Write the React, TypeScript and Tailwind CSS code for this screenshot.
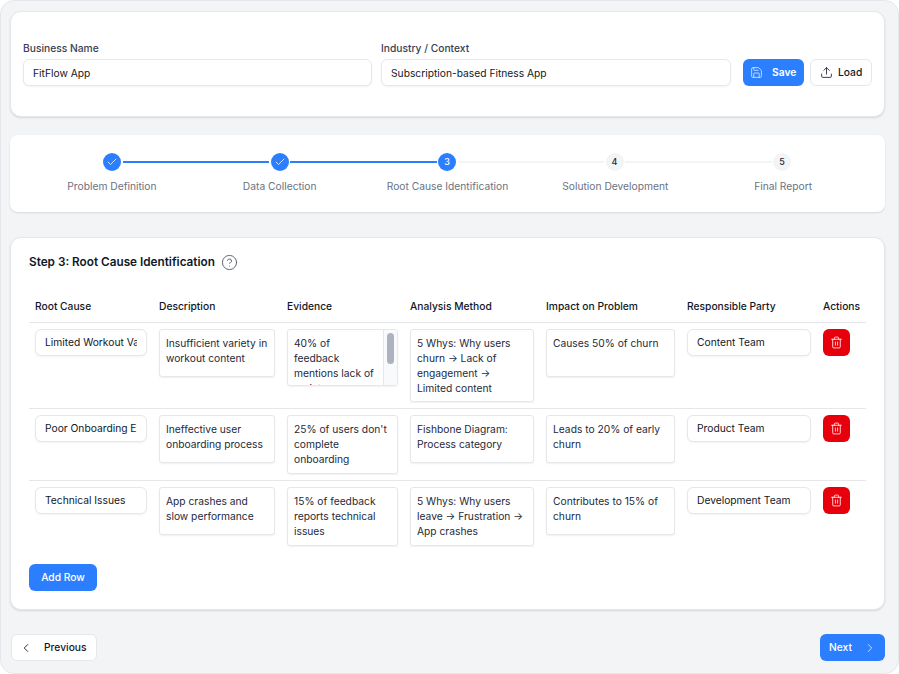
import { Check, ChevronLeft, ChevronRight, CircleHelp, Save, Trash2, Upload } from "lucide-react";

const steps = [
  { n: 1, label: "Problem Definition", state: "done" },
  { n: 2, label: "Data Collection", state: "done" },
  { n: 3, label: "Root Cause Identification", state: "active" },
  { n: 4, label: "Solution Development", state: "todo" },
  { n: 5, label: "Final Report", state: "todo" },
];

const columns = [
  { title: "Root Cause", width: "w-[124px]" },
  { title: "Description", width: "w-[128px]" },
  { title: "Evidence", width: "w-[123px]" },
  { title: "Analysis Method", width: "w-[136px]" },
  { title: "Impact on Problem", width: "w-[141px]" },
  { title: "Responsible Party", width: "w-[136px]" },
  { title: "Actions", width: "w-[49px]" },
];

const rows = [
  {
    cause: "Limited Workout Variety",
    description: "Insufficient variety in workout content",
    evidence: "40% of feedback mentions lack of variety",
    method: "5 Whys: Why users churn → Lack of engagement → Limited content",
    impact: "Causes 50% of churn",
    party: "Content Team",
    evidenceHeight: "h-[57px]",
    methodHeight: "h-[73px]",
    scroll: true,
  },
  {
    cause: "Poor Onboarding Experience",
    description: "Ineffective user onboarding process",
    evidence: "25% of users don't complete onboarding",
    method: "Fishbone Diagram: Process category",
    impact: "Leads to 20% of early churn",
    party: "Product Team",
    evidenceHeight: "h-[59px]",
    methodHeight: "h-[48px]",
    scroll: false,
  },
  {
    cause: "Technical Issues",
    description: "App crashes and slow performance",
    evidence: "15% of feedback reports technical issues",
    method: "5 Whys: Why users leave → Frustration → App crashes",
    impact: "Contributes to 15% of churn",
    party: "Development Team",
    evidenceHeight: "h-[59px]",
    methodHeight: "h-[59px]",
    scroll: false,
  },
];

const Cell = ({ value, height, narrow }: { value: string; height: string; narrow?: boolean }) => (
  <textarea
    readOnly
    value={value}
    className={`block w-full ${height} resize-none overflow-hidden rounded-[3px] border border-gray-200 bg-white py-[6px] pl-[6px] ${narrow ? "pr-[20px]" : "pr-[5px]"} text-[10.25px] leading-[15px] text-gray-800 shadow-[0_1px_2px_rgba(0,0,0,0.06)] outline-none`}
  />
);

const TextInput = ({ value }: { value: string }) => (
  <input
    readOnly
    value={value}
    className="block h-[27px] w-full rounded-[6px] border border-gray-200 bg-white px-[9px] text-[10.25px] font-normal text-gray-900 shadow-[0_1px_2px_rgba(0,0,0,0.05)] outline-none"
  />
);

export default function App() {
  return (
    <div className="h-[674px] w-[899px] overflow-hidden rounded-[14px] border border-gray-200 bg-gray-100 font-['Inter',sans-serif] antialiased">
      <div className="flex flex-col pt-[10px] pr-[13px] pl-[9px]">
        {/* Business details */}
        <div className="flex h-[106px] items-end gap-[6px] rounded-[11px] border border-gray-200 bg-white px-[12px] pb-[30px] shadow-[0_1px_2px_rgba(0,0,0,0.12)]">
          <div className="flex flex-1 gap-[9px]">
            <label className="flex w-[349px] flex-col gap-[3px] text-[10.25px] font-medium text-gray-700">
              Business Name
              <TextInput value="FitFlow App" />
            </label>
            <label className="flex w-[350px] flex-col gap-[3px] text-[10.25px] font-medium text-gray-700">
              Industry / Context
              <TextInput value="Subscription-based Fitness App" />
            </label>
          </div>
          <button className="flex h-[27px] w-[61px] items-center gap-[9.5px] rounded-[6px] bg-blue-500 pl-[6.5px] text-[10.25px] font-semibold text-white">
            <Save className="h-[13px] w-[13px]" strokeWidth={1.25} />
            Save
          </button>
          <button className="flex h-[27px] w-[62px] items-center gap-[5px] rounded-[6px] border border-gray-200 bg-white pl-[9px] text-[10.25px] font-medium text-gray-900">
            <Upload className="h-[13px] w-[13px]" strokeWidth={1.5} />
            Load
          </button>
        </div>

        {/* Stepper */}
        <div className="mt-[18px] flex h-[77px] flex-col rounded-[8px] bg-white pt-[18px] shadow-[0_1px_2px_rgba(0,0,0,0.12)]">
          <div className="flex items-center pr-[94px] pl-[93px]">
            {steps.map((step, i) => (
              <div key={step.n} className={`flex items-center ${i < steps.length - 1 ? "flex-1" : ""}`}>
                <div
                  className={`flex h-[18px] w-[18px] shrink-0 items-center justify-center rounded-full text-[9px] font-medium ${
                    step.state === "todo" ? "bg-gray-100 text-gray-800" : "bg-blue-500 text-white"
                  }`}
                >
                  {step.state === "done" ? <Check className="h-[12px] w-[12px]" strokeWidth={1.5} /> : step.n}
                </div>
                {i < steps.length - 1 && (
                  <div className={`mx-[1.5px] h-[2px] flex-1 ${step.state === "done" ? "bg-blue-500" : "bg-gray-100"}`} />
                )}
              </div>
            ))}
          </div>
          <div className="mt-[8px] grid grid-cols-5 px-[18px]">
            {steps.map((step) => (
              <div key={step.n} className="text-center text-[10.25px] leading-[15px] text-gray-500">
                {step.label}
              </div>
            ))}
          </div>
        </div>

        {/* Root cause table */}
        <div className="mt-[25px] h-[373px] rounded-[11px] border border-gray-200 bg-white px-[18px] shadow-[0_1px_2px_rgba(0,0,0,0.12)]">
          <div className="flex h-[33px] items-end gap-[6px]">
            <h2 className="text-[11.75px] leading-[18px] font-semibold text-gray-900">Step 3: Root Cause Identification</h2>
            <CircleHelp className="h-[17px] w-[17px] text-gray-600" strokeWidth={1.25} />
          </div>
          <table className="mt-[20px] w-[837px] table-fixed border-collapse">
            <thead>
              <tr className="border-b border-gray-200">
                {columns.map((col) => (
                  <th key={col.title} className={`${col.width} h-[31px] px-[6px] text-left align-middle text-[10.25px] font-medium text-gray-900`}>
                    {col.title}
                  </th>
                ))}
              </tr>
            </thead>
            <tbody>
              {rows.map((row, i) => (
                <tr key={row.party} className={i < rows.length - 1 ? "border-b border-gray-200" : ""}>
                  <td className="p-[6px] align-top">
                    <TextInput value={row.cause} />
                  </td>
                  <td className="p-[6px] align-top">
                    <Cell value={row.description} height="h-[48px]" />
                  </td>
                  <td className="p-[6px] align-top">
                    <div className="relative">
                      <Cell value={row.evidence} height={row.evidenceHeight} narrow={row.scroll} />
                      {row.scroll && (
                        <div className="absolute top-[1px] right-[1px] bottom-[1px] w-[14px] border-l border-gray-200 bg-gray-50 px-[3px] py-[3px]">
                          <div className="h-[31px] rounded-full bg-gray-400/80" />
                        </div>
                      )}
                    </div>
                  </td>
                  <td className="p-[6px] align-top">
                    <Cell value={row.method} height={row.methodHeight} />
                  </td>
                  <td className="p-[6px] align-top">
                    <Cell value={row.impact} height="h-[48px]" />
                  </td>
                  <td className="p-[6px] align-top">
                    <TextInput value={row.party} />
                  </td>
                  <td className="p-[6px] align-top">
                    <button className="flex h-[27px] w-[27px] items-center justify-center rounded-[6px] bg-red-600 text-white">
                      <Trash2 className="h-[13px] w-[13px]" strokeWidth={1.5} />
                    </button>
                  </td>
                </tr>
              ))}
            </tbody>
          </table>
          <button className="mt-[12px] h-[27px] w-[68px] rounded-[6px] bg-blue-500 pt-[1px] text-[10.25px] font-medium text-white">
            Add Row
          </button>
        </div>

        {/* Footer nav */}
        <div className="mt-[24px] flex items-center justify-between">
          <button className="ml-[1px] flex h-[27px] w-[86px] items-center gap-[11px] rounded-[6px] border border-gray-200 bg-white pl-[7px] text-[10.25px] font-medium text-gray-900">
            <ChevronLeft className="h-[14px] w-[14px]" strokeWidth={1.5} />
            Previous
          </button>
          <button className="flex h-[27px] w-[65px] items-center gap-[11px] rounded-[6px] bg-blue-500 pl-[9px] text-[10.25px] font-medium text-white">
            Next
            <ChevronRight className="h-[14px] w-[14px]" strokeWidth={1.25} />
          </button>
        </div>
      </div>
    </div>
  );
}
